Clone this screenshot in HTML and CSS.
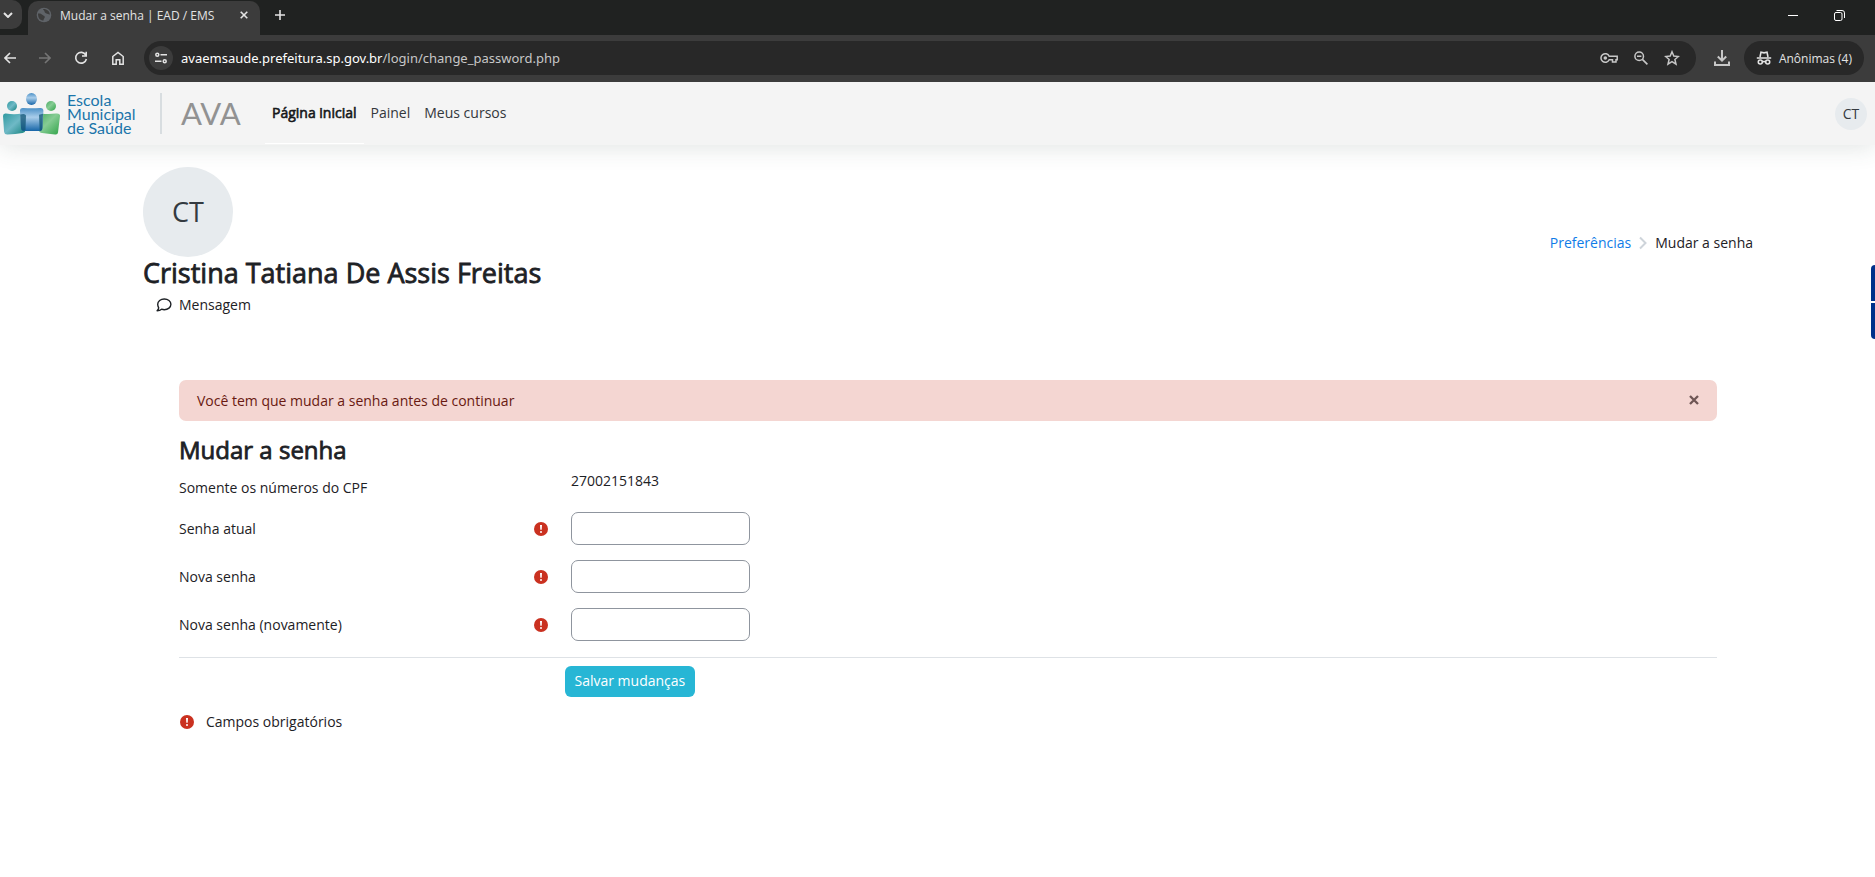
FILE: index.html
```html
<!DOCTYPE html>
<html lang="pt-BR">
<head>
<meta charset="utf-8">
<title>Mudar a senha | EAD / EMS</title>
<link rel="stylesheet" href="styles.css">
</head>
<body>
<svg class="defs" aria-hidden="true">
  <defs>
    <symbol id="required" viewBox="0 0 14 14"><circle cx="7" cy="7" r="7" fill="#ca3120"/><path d="M6 3h2l-.3 4.800H6.300z" fill="#fff"/><circle cx="7" cy="9.900" r="1" fill="#fff"/></symbol>
  </defs>
</svg>

<div class="browser">
  <div class="tabstrip">
    <button class="tab-search" aria-label="Pesquisar guias"><svg width="10" height="6" viewBox="0 0 10 6"><path d="M1 1l4 4 4-4" fill="none" stroke="currentColor" stroke-width="2"/></svg></button>
    <div class="tab">
      <svg width="16" height="16" viewBox="0 0 16 16"><circle cx="8" cy="8" r="7.300" fill="#5f6368"/><path d="M2 6.500c2-.4 3.600.2 4.600 1.500.8 1 2.200.6 2.200 2 0 1.200-1.200 1.400-1.300 3.600C4 13.600 1.900 11 2 6.500zM7 2c.2 1.500 1.500 1.200 1.500 2.500S9.800 6 10.500 6.500s2 .2 3.300 1.300C14 4.500 11 1.800 7 2z" fill="#3c3c3c"/></svg>
      <span class="tab-title">Mudar a senha | EAD / EMS</span>
      <button class="tab-close" aria-label="Fechar guia"><svg width="8" height="8" viewBox="0 0 8 8"><path d="M.7.700l6.600 6.600M7.300.700L.7 7.300" stroke="currentColor" stroke-width="1.600"/></svg></button>
    </div>
    <button class="new-tab" aria-label="Nova guia"><svg width="10" height="10" viewBox="0 0 10 10"><path d="M5 0v10M0 5h10" stroke="currentColor" stroke-width="1.600"/></svg></button>
    <div class="window-buttons">
      <button aria-label="Minimizar"><svg width="10" height="11" viewBox="0 0 10 11"><path d="M0 5.500h10" stroke="#fff"/></svg></button>
      <button aria-label="Restaurar"><svg width="11" height="11" viewBox="0 0 11 11"><rect x=".5" y="2.500" width="7.500" height="8" rx="1.500" fill="none" stroke="#fff"/><path d="M2.500.500H8a2.400 2.400 0 0 1 2.500 2.400V8" fill="none" stroke="#fff"/></svg></button>
    </div>
  </div>

  <div class="toolbar">
    <div class="nav-buttons">
      <button aria-label="Voltar"><svg width="12" height="12" viewBox="0 0 12 12"><path d="M12 6H1M6 1L1 6l5 5" fill="none" stroke="currentColor" stroke-width="1.600"/></svg></button>
      <button class="dim" aria-label="Avançar"><svg width="12" height="12" viewBox="0 0 12 12"><path d="M0 6h11M6 1l5 5-5 5" fill="none" stroke="currentColor" stroke-width="1.600"/></svg></button>
      <button aria-label="Atualizar"><svg width="14" height="14" viewBox="0 0 14 14"><path d="M11.800 4A5.400 5.400 0 1 0 12.400 8M12.200.800V5H8" fill="none" stroke="currentColor" stroke-width="1.600"/></svg></button>
      <button aria-label="Página inicial"><svg width="14" height="14" viewBox="0 0 14 14"><path d="M1.800 5.500L7 1.400l5.200 4.100v7.700H8.800V8.800H5.200v4.400H1.800z" fill="none" stroke="currentColor" stroke-width="1.500"/></svg></button>
    </div>
    <div class="omnibox">
      <button class="site-info" aria-label="Informações do site"><svg width="12" height="12" viewBox="0 0 12 12"><g fill="none" stroke="currentColor" stroke-width="1.500"><circle cx="2.300" cy="2.800" r="1.500"/><path d="M5.500 2.800H12M0 9.200h6.500"/><circle cx="9.700" cy="9.200" r="1.500"/></g></svg></button>
      <span class="url">avaemsaude.prefeitura.sp.gov.br<span class="url-path">/login/change_password.php</span></span>
      <div class="omnibox-actions">
        <button aria-label="Senhas"><svg width="18" height="12" viewBox="0 0 18 12"><path d="M9.200 4.300a4.300 4.300 0 1 0 0 3.400H12.500V10H16V7.700h1.200V4.300z" fill="none" stroke="currentColor" stroke-width="1.500"/><circle cx="5.300" cy="6" r="1.800" fill="currentColor"/></svg></button>
        <button aria-label="Zoom"><svg width="14" height="14" viewBox="0 0 14 14"><circle cx="5.200" cy="5.200" r="4.300" fill="none" stroke="currentColor" stroke-width="1.500"/><path d="M8.400 8.400l5 5M3 5.200h4.400" stroke="currentColor" stroke-width="1.600"/></svg></button>
        <button aria-label="Favoritar"><svg width="16" height="16" viewBox="0 0 16 16"><path d="M8 1.800l1.800 4.300 4.600.4-3.500 3 1.100 4.600-4-2.500-4 2.500 1.100-4.600-3.500-3 4.600-.4z" fill="none" stroke="currentColor" stroke-width="1.500"/></svg></button>
      </div>
    </div>
    <button class="download" aria-label="Downloads"><svg width="16" height="16" viewBox="0 0 16 16"><path d="M8 0v10.500M3.800 6.500L8 10.700l4.200-4.200M1 11.500V15h14v-3.500" fill="none" stroke="currentColor" stroke-width="2"/></svg></button>
    <button class="incognito"><svg width="16" height="14" viewBox="0 0 16 14"><g fill="none" stroke="currentColor" stroke-width="1.600"><path d="M4 6l1-4.800 3 .7 3-.7L12 6M.800 7h14.400"/><circle cx="4.300" cy="11" r="2"/><circle cx="11.700" cy="11" r="2"/><path d="M6.300 10.600h3.400"/></g></svg><span>Anônimas (4)</span></button>
  </div>
</div>

<header class="navbar">
  <a class="brand" href="#" aria-label="Escola Municipal de Saúde AVA">
    <svg class="people" width="60" height="44" viewBox="0 0 60 44">
      <defs>
        <linearGradient id="teal" x1="0" y1="0" x2="1" y2="1"><stop offset="0" stop-color="#2f9aa0"/><stop offset=".5" stop-color="#6fb9c6"/><stop offset="1" stop-color="#12807c"/></linearGradient>
        <linearGradient id="blue" x1="0" y1="0" x2="0" y2="1"><stop offset="0" stop-color="#4b90c6"/><stop offset=".4" stop-color="#a9cdea"/><stop offset="1" stop-color="#1766a8"/></linearGradient>
        <linearGradient id="green" x1="0" y1="0" x2="1" y2="1"><stop offset="0" stop-color="#48ab63"/><stop offset=".45" stop-color="#86cc94"/><stop offset="1" stop-color="#30a348"/></linearGradient>
      </defs>
      <circle cx="12" cy="15" r="5" fill="url(#teal)"/>
      <circle cx="51" cy="15" r="5" fill="url(#green)"/>
      <ellipse cx="31.500" cy="8" rx="5.500" ry="6" fill="url(#blue)"/>
      <path d="M3 25q0-3 3-2.500 8 1.500 16 0 4-.8 4 2l-.5 14q0 3-3 3.500-7 1-15 1.500-3 .2-3.400-2.500z" fill="url(#teal)"/>
      <path d="M38 24q0-2 3-1.600 7 1 15 .1 4.300-.5 4 2.500l-2 16.500q-.3 2.500-3 2-7-1-13-1.500-3-.3-3.200-3z" fill="url(#green)"/>
      <path d="M20 20q-.2-3 3-3 9 .6 17 0 3.500-.2 3.400 3l-1 17q-.2 3-3 3H24q-2.600 0-3-3z" fill="url(#blue)"/>
      <path d="M20.200 23.500q5-1.500 5.800 1l-.5 14.500q-4.300 2-4.500-2zM43 22.700l-4 1 .7 16q2.700 1 2.700-2.700z" fill="#105474" opacity=".75"/>
    </svg>
    <span class="brand-name">Escola<br>Municipal<br>de Saúde</span>
    <span class="brand-ava">AVA</span>
  </a>
  <nav class="primary-nav">
    <a class="active" href="#">Página inicial</a>
    <a href="#">Painel</a>
    <a href="#">Meus cursos</a>
  </nav>
  <button class="user-menu" aria-label="Menu do usuário"><span class="avatar-small">CT</span></button>
</header>

<main class="page">
  <section class="page-header">
    <div class="profile">
      <div class="avatar">CT</div>
      <h1>Cristina Tatiana De Assis Freitas</h1>
      <a class="message" href="#"><svg width="16" height="14" viewBox="0 0 16 14"><path d="M8.300 1c3.700 0 6.600 2.400 6.600 5.300s-2.900 5.400-6.600 5.400c-1 0-1.900-.2-2.700-.5-1 .9-2.600 1.500-4.500 1.500.9-.9 1.500-1.900 1.600-2.800C2.100 8.800 1.700 7.600 1.700 6.300 1.700 3.400 4.600 1 8.300 1z" fill="none" stroke="currentColor" stroke-width="1.400" stroke-linejoin="round"/></svg>Mensagem</a>
    </div>
    <nav class="breadcrumb" aria-label="Trilha">
      <a href="#">Preferências</a>
      <svg width="8" height="14" viewBox="0 0 8 14"><path d="M1 1.500L6.500 7 1 12.500" fill="none" stroke="#ced4da" stroke-width="2"/></svg>
      <span>Mudar a senha</span>
    </nav>
  </section>

  <section class="content">
    <div class="alert" role="alert">
      <span>Você tem que mudar a senha antes de continuar</span>
      <button aria-label="Fechar"><svg width="10" height="10" viewBox="0 0 10 10"><path d="M1 1l8 8M9 1L1 9" stroke="#6e5554" stroke-width="2.300"/></svg></button>
    </div>
    <h2>Mudar a senha</h2>
    <form>
      <div class="row username">
        <span class="label">Somente os números do CPF</span>
        <span class="value">27002151843</span>
      </div>
      <div class="row">
        <div class="label"><label for="current">Senha atual</label><svg width="14" height="14"><use href="#required"/></svg></div>
        <input id="current" type="password">
      </div>
      <div class="row">
        <div class="label"><label for="new1">Nova senha</label><svg width="14" height="14"><use href="#required"/></svg></div>
        <input id="new1" type="password">
      </div>
      <div class="row">
        <div class="label"><label for="new2">Nova senha (novamente)</label><svg width="14" height="14"><use href="#required"/></svg></div>
        <input id="new2" type="password">
      </div>
      <div class="actions"><button type="submit">Salvar mudanças</button></div>
      <p class="legend"><svg width="14" height="14"><use href="#required"/></svg>Campos obrigatórios</p>
    </form>
  </section>
</main>

<aside class="drawer-tabs" aria-label="Acessibilidade">
  <button aria-label="Libras"></button>
  <button aria-label="Acessibilidade"></button>
</aside>
</body>
</html>
```
FILE: styles.css
```css
* { box-sizing: border-box; }

body {
  margin: 0;
  background: #fff;
  color: #1d2125;
  font: 14px/21px "Open Sans", sans-serif;
  overflow-x: hidden;
}

button {
  border: 0;
  padding: 0;
  background: none;
  color: inherit;
  font: inherit;
}

a { color: inherit; text-decoration: none; }
svg { display: block; flex: none; }
.defs { position: absolute; width: 0; height: 0; }

/* Browser frame */
.browser { color: #e3e3e3; }

.tabstrip {
  display: flex;
  height: 35px;
  background: #202221;
}
.tab-search {
  display: flex;
  align-items: center;
  width: 22px;
  height: 29px;
  padding-left: 3px;
  border-radius: 0 10px 10px 0;
  background: #3c3c3c;
}
.tab {
  display: flex;
  align-items: center;
  width: 232px;
  height: 34px;
  margin: 1px 0 0 6px;
  padding: 0 12px 6px 8px;
  border-radius: 10px 10px 0 0;
  background: #3c3c3c;
}
.tab-title { flex: 1; margin-left: 8px; font-size: 12px; white-space: nowrap; }
.new-tab { display: flex; align-items: center; height: 30px; margin-left: 15px; }
.window-buttons { display: flex; gap: 36px; height: 31px; margin: 0 30px 0 auto; }

.toolbar {
  display: flex;
  align-items: center;
  height: 47px;
  padding: 0 11px 1px 4px;
  background: #3c3c3c;
}
.nav-buttons { display: flex; align-items: center; gap: 23px; width: 140px; }
.nav-buttons .dim { color: #757575; }
.omnibox {
  display: flex;
  flex: 1;
  align-items: center;
  height: 34px;
  padding: 0 16px 0 5px;
  border-radius: 17px;
  background: #282828;
}
.site-info {
  display: flex;
  align-items: center;
  justify-content: center;
  width: 24px;
  height: 24px;
  border-radius: 50%;
  background: #3c3c3c;
}
.url { flex: 1; margin-left: 8px; color: #fff; font: 13px/18px "Noto Sans", sans-serif; }
.url-path { color: #c7c7c7; }
.omnibox-actions { display: flex; align-items: center; gap: 16px; color: #c7c7c7; }
.download { margin: 0 14px 0 18px; color: #c7c7c7; }
.incognito {
  display: flex;
  align-items: center;
  gap: 7px;
  height: 34px;
  padding: 0 12px;
  border-radius: 17px;
  background: #282828;
  font-size: 12px;
}

/* Site navigation */
.navbar {
  position: relative;
  display: flex;
  height: 63px;
  background: #f4f4f4;
  box-shadow: 0 2px 24px rgba(60, 80, 75, 0.16);
  clip-path: inset(0 0 -40px 0);
}
.brand { display: flex; align-items: center; padding-bottom: 1px; }
.brand-name {
  width: 93px;
  margin: 1px 0 0 7px;
  color: #1b75aa;
  font: 16px/14px "Lato", sans-serif;
}
.brand-ava {
  width: 79px;
  padding-left: 19px;
  border-left: 2px solid #d8dde0;
  color: #929292;
  font: 31px/41px "Lato", sans-serif;
}
.primary-nav { display: flex; margin-left: 26px; padding-bottom: 1px; color: #33373b; }
.primary-nav a { display: flex; align-items: center; padding: 0 7px; border-bottom: 1px solid transparent; }
.primary-nav .active { color: #16181a; border-color: #fff; -webkit-text-stroke: 0.6px #16181a; }
.user-menu { margin: 0 8px 0 auto; }
.avatar-small {
  display: flex;
  align-items: center;
  justify-content: center;
  width: 32px;
  height: 32px;
  border-radius: 50%;
  background: #e7ebee;
  color: #343a40;
}

/* Page header */
.page { padding: 22px 122px 0 143px; }
.page-header { display: flex; justify-content: space-between; align-items: center; }
.avatar {
  display: flex;
  align-items: center;
  justify-content: center;
  width: 90px;
  height: 90px;
  padding-bottom: 2px;
  border-radius: 50%;
  background: #e7ebee;
  color: #343a40;
  font-size: 27px;
}
h1, h2 { margin: 0; font-weight: 400; -webkit-text-stroke: 0.8px #1d2125; }
h1 { font-size: 27px; line-height: 32px; }
.message { display: flex; align-items: center; gap: 7px; padding: 5px 0 0 13px; }
.breadcrumb { display: flex; align-items: center; gap: 8px; padding-top: 3px; }
.breadcrumb a { color: #0f7ce8; }

/* Form */
.content { padding: 65px 36px 0; }
.alert {
  display: flex;
  align-items: center;
  justify-content: space-between;
  height: 41px;
  padding: 0 18px 1px;
  border-radius: 7px;
  background: #f4d6d2;
  color: #691911;
}
h2 { margin-top: 13px; font-size: 24px; line-height: 32px; }
.row {
  display: grid;
  grid-template-columns: 25% 1fr;
  align-items: center;
  margin: 0 -15px 15px;
}
.row > * { margin: 0 14px 0 15px; }
.row .label { display: flex; align-items: center; justify-content: space-between; margin-right: 8px; }
.row .value { padding-bottom: 14px; }
.username { height: 42px; margin-bottom: 4px; }
.row input {
  width: 179px;
  height: 33px;
  padding: 0 10px;
  border: 1px solid #8f959e;
  border-radius: 7px;
  background: #fff;
  font: inherit;
}
.actions {
  margin-top: 16px;
  padding: 8px 0 0 calc(25% + 1px);
  border-top: 1px solid #dee2e6;
}
.actions button {
  display: block;
  height: 31px;
  padding: 0 10px 2px;
  border-radius: 6px;
  background: #27b6d5;
  color: #fff;
}
.legend { display: flex; align-items: center; gap: 12px; margin: 14px 0 0; padding-left: 1px; }

.drawer-tabs {
  position: absolute;
  top: 265px;
  right: 0;
  display: grid;
  gap: 2px;
}
.drawer-tabs button { width: 4px; height: 36px; background: #00318a; }
.drawer-tabs button:first-child { border-radius: 6px 0 0 0; }
.drawer-tabs button:last-child { border-radius: 0 0 0 6px; }
```
